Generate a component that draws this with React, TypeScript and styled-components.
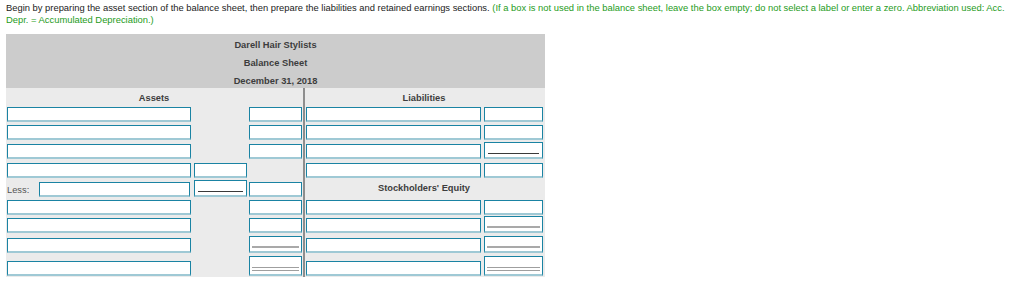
import styled, { createGlobalStyle } from "styled-components";

type Rule = "dark" | "single" | "double";

type Cell =
  | { kind: "field"; rule?: Rule }
  | { kind: "empty" }
  | { kind: "less" }
  | { kind: "heading"; text: string };

const F = (rule?: Rule): Cell => ({ kind: "field", rule });
const _: Cell = { kind: "empty" };

// widths of the boxes in the five columns (the divider sits between 3 and 4)
const fieldWidths = [184, 53, 53, 175, 59];

const rows: Cell[][] = [
  [F(), _, F(), F(), F()],
  [F(), _, F(), F(), F()],
  [F(), _, F(), F(), F("dark")],
  [F(), F(), _, F(), F()],
  [{ kind: "less" }, F("dark"), F(), { kind: "heading", text: "Stockholders' Equity" }],
  [F(), _, F(), F(), F()],
  [F(), _, F(), F(), F("single")],
  [F(), _, F("single"), F(), F("single")],
  [F(), _, F("double"), F(), F("double")],
];

export default function App() {
  return (
    <>
      <GlobalStyle />
      <Page>
        <Intro>
          Begin by preparing the asset section of the balance sheet, then prepare the liabilities
          and retained earnings sections.{" "}
          <Note>
            (If a box is not used in the balance sheet, leave the box empty; do not select a label
            or enter a zero. Abbreviation used: Acc. Depr. = Accumulated Depreciation.)
          </Note>
        </Intro>

        <Sheet>
          <SheetHeader>
            <div>Darell Hair Stylists</div>
            <div>Balance Sheet</div>
            <div>December 31, 2018</div>
          </SheetHeader>

          <SheetBody>
            <Divider />
            <Heading $span={3}>Assets</Heading>
            <Heading $span={2}>Liabilities</Heading>
            {rows.map((row, r) => {
              let col = 0;
              return row.map((cell, i) => {
                const key = `${r}-${i}`;
                const c = col;
                if (cell.kind === "heading") {
                  col += 2;
                  return (
                    <Heading key={key} $span={2}>
                      {cell.text}
                    </Heading>
                  );
                }
                col += 1;
                if (cell.kind === "empty") return <span key={key} />;
                if (cell.kind === "less")
                  return (
                    <LessCell key={key}>
                      <LessLabel>Less:</LessLabel>
                      <Field $w={0} />
                    </LessCell>
                  );
                return <Field key={key} $w={fieldWidths[c]} $rule={cell.rule} />;
              });
            })}
          </SheetBody>
        </Sheet>
      </Page>
    </>
  );
}

const GlobalStyle = createGlobalStyle`
  body {
    margin: 0;
    background: #fff;
    font-family: "Liberation Sans", Arial, Helvetica, sans-serif;
  }
`;

const Page = styled.div`
  padding: 2px 6px 0;
`;

const Intro = styled.p`
  margin: 0;
  width: 1008px;
  font-size: 9.4px;
  line-height: 12px;
  color: #222;
`;

const Note = styled.span`
  color: #1e9b22;
`;

const Sheet = styled.div`
  width: 539px;
  margin-top: 8px;
`;

const SheetHeader = styled.div`
  box-sizing: border-box;
  height: 54px;
  padding-top: 2px;
  background: #cccccc;
  text-align: center;
  font-size: 9.3px;
  font-weight: bold;
  line-height: 18px;
  color: #3d3d3d;
`;

const SheetBody = styled.div`
  display: grid;
  grid-template-columns: 185px 56px 55px 3px 176px 62px;
  grid-template-rows: 19px 15px 18px 19px 19px 19px 18px 18px 20px 23px;
  align-items: end;
  padding: 0 2px 1px 0;
  background: #ebebeb;
`;

const Divider = styled.div`
  grid-column: 4;
  grid-row: 1 / -1;
  justify-self: end;
  align-self: stretch;
  width: 2px;
  margin-bottom: -1px;
  background: #8e8e8e;
`;

const Heading = styled.div<{ $span: number }>`
  grid-column: span ${(p) => p.$span};
  align-self: center;
  padding-top: 1px;
  text-align: center;
  font-size: 9.3px;
  font-weight: bold;
  color: #3d3d3d;
`;

const LessCell = styled.div`
  display: flex;
  align-items: center;
  padding: 0 1px;
`;

const LessLabel = styled.span`
  width: 32px;
  font-size: 9.3px;
  color: #555;
`;

const ruleBackground = (rule?: Rule) => {
  if (rule === "dark")
    return `background-image: linear-gradient(#3a3a3a, #3a3a3a);
      background-size: calc(100% - 6px) 1px;
      background-position: 3px calc(100% - 3px);`;
  if (rule === "single")
    return `background-image: linear-gradient(#a9a9a9, #a9a9a9);
      background-size: calc(100% - 4px) 2px;
      background-position: 2px calc(100% - 3px);`;
  if (rule === "double")
    return `background-image: linear-gradient(#9f9f9f, #9f9f9f), linear-gradient(#9f9f9f, #9f9f9f);
      background-size: calc(100% - 4px) 1px, calc(100% - 4px) 1px;
      background-position: 2px calc(100% - 3px), 2px calc(100% - 6px);`;
  return "";
};

const Field = styled.input<{ $w: number; $rule?: Rule }>`
  box-sizing: border-box;
  justify-self: end;
  width: ${(p) => (p.$w ? `${p.$w}px` : "auto")};
  flex: ${(p) => (p.$w ? "none" : "1")};
  min-width: 0;
  height: ${(p) => (p.$rule === "double" ? 20 : p.$rule ? 17 : 15)}px;
  margin: 0;
  padding: 0 3px;
  border: 1px solid #1a83a3;
  border-bottom: 2px solid #9fc9d5;
  border-radius: 0;
  outline: none;
  background-color: #fff;
  background-repeat: no-repeat;
  ${(p) => ruleBackground(p.$rule)}
`;
